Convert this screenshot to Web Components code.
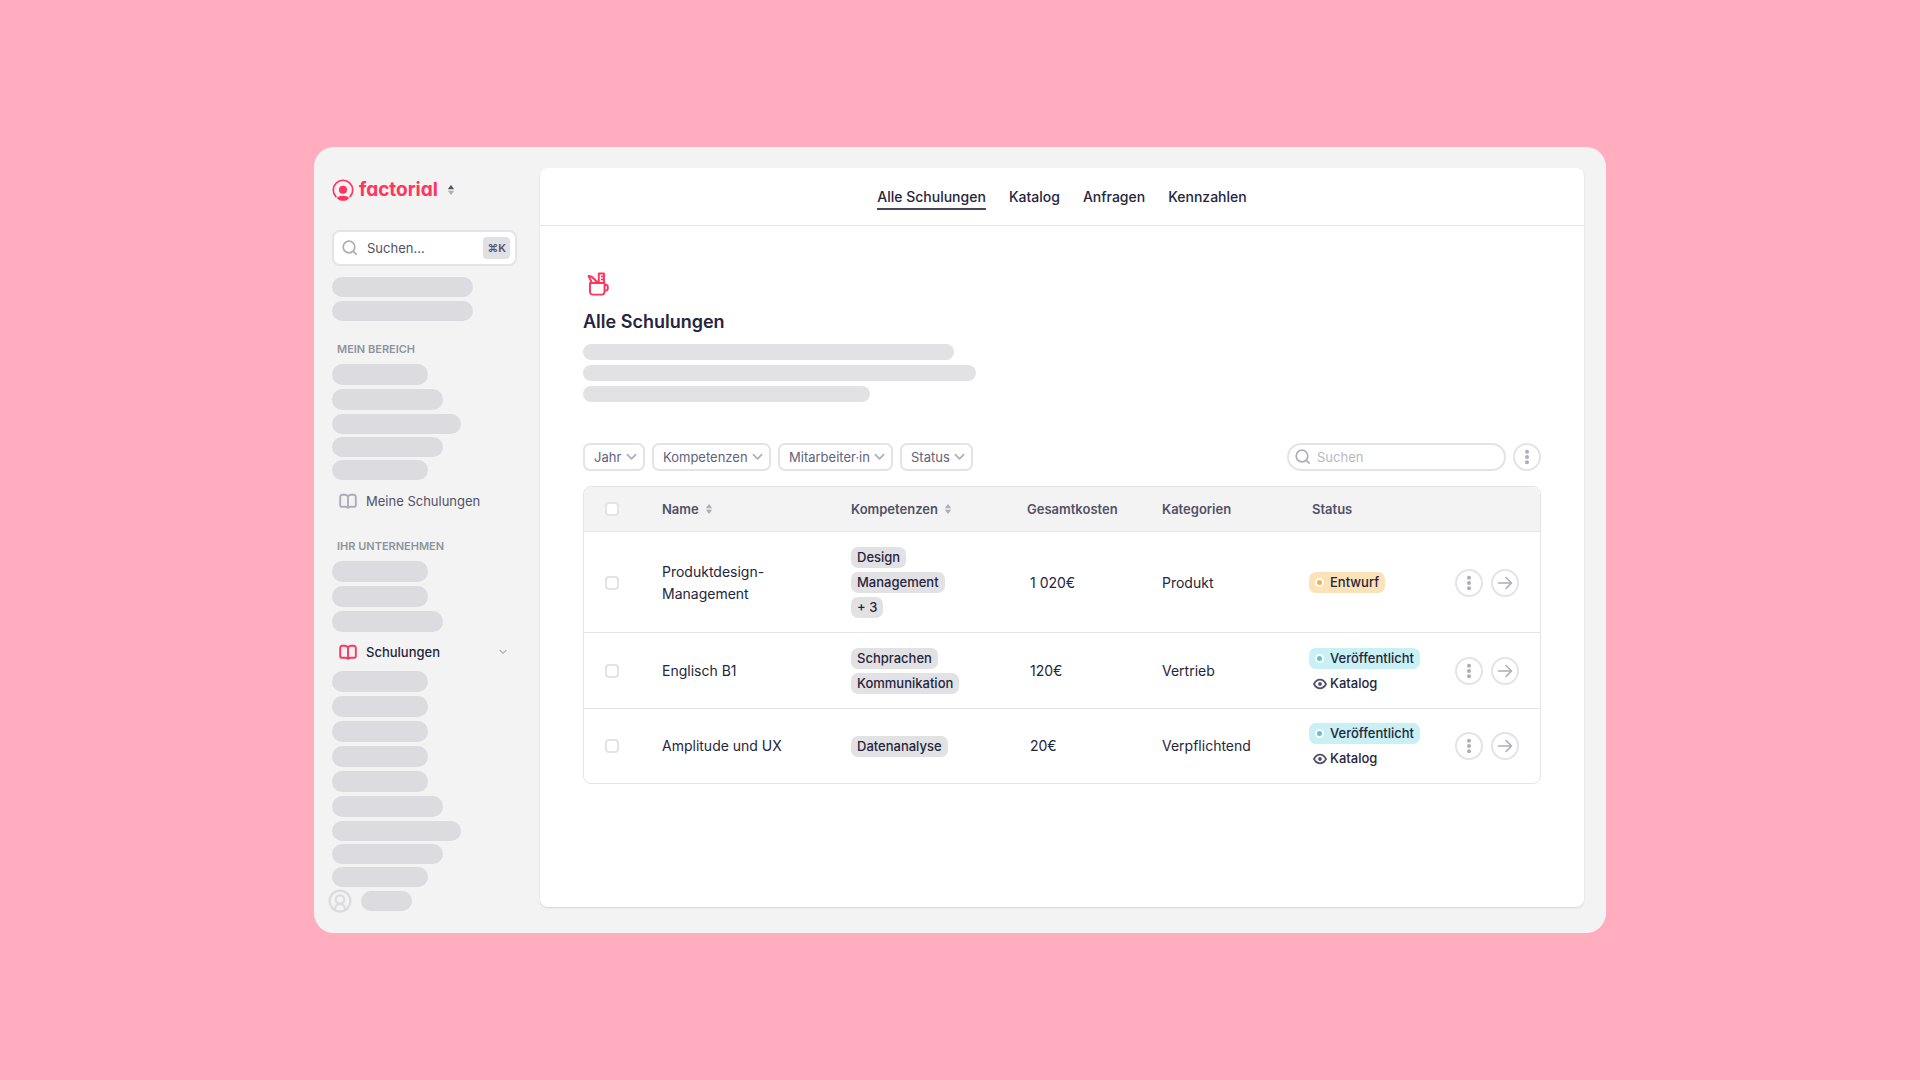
<!DOCTYPE html>
<html lang="de">
<head>
<meta charset="utf-8">
<title>Factorial – Alle Schulungen</title>
<style>
  html, body { height: 100%; margin: 0; }
  body {
    background: #ffadbf;
    font-family: Inter, "Liberation Sans", sans-serif;
    font-size: 14px;
    color: #25253d;
    --line: #e4e4e7;
    --muted: #adadba;
    --accent: #ff355e;
    --soft: #525169;
  }
</style>
</head>
<body>
<training-app></training-app>

<script>
const ICONS = {
  search: ['0 0 16 16', '<circle cx="7" cy="7" r="5.8"/><path d="M11.3 11.3L14.2 14.2"/>', 1.7],
  book: ['0 0 18 16', '<path d="M9 3.6C8.2 2.3 7 1.8 5.4 1.8H3.4C2 1.8 1.2 2.6 1.2 4v8.4c0 .9.5 1.4 1.4 1.4H6c1.4 0 2.4.3 3 1 .6-.7 1.6-1 3-1h3.4c.9 0 1.4-.5 1.4-1.4V4c0-1.4-.8-2.2-2.2-2.2h-2C11 1.8 9.8 2.3 9 3.6zM9 3.6v11"/>', 1.9],
  chevron: ['0 0 12 8', '<path d="M1.5 1.5L6 6l4.5-4.5"/>', 1.8],
  arrow: ['0 0 16 16', '<path d="M1.5 8h13M9 2.5L14.5 8 9 13.5"/>', 1.6],
  dots: ['0 0 16 16', '<g fill="currentColor" stroke="none"><circle cx="8" cy="2.7" r="2"/><circle cx="8" cy="8" r="2"/><circle cx="8" cy="13.3" r="2"/></g>', 1],
  sort: ['0 0 8 12', '<g stroke="none" fill="currentColor"><path d="M4 1L7.2 5.2H.8z"/><path d="M4 11L.8 6.8h6.4z" style="fill:var(--sort-down,currentColor)"/></g>', 1],
  eye: ['0 0 14 12', '<path d="M1 6c1.4-2.9 3.5-4.3 6-4.3S11.6 3.1 13 6c-1.4 2.9-3.5 4.3-6 4.3S2.4 8.9 1 6z"/><circle cx="7" cy="6" r="1.9" fill="currentColor" stroke="none"/>', 1.8],
  user: ['0 0 24 24', '<circle cx="12" cy="12" r="10.4"/><circle cx="12" cy="10.5" r="4.2"/><path d="M7 19.5c.8-3.2 2.6-4.7 5-4.7s4.2 1.5 5 4.7"/>', 2.2],
  logo: ['0 0 24 24', '<path d="M4.3 19.3a10.6 10.6 0 1 1 15.4 0"/><circle cx="12" cy="11.8" r="4.4" fill="currentColor" stroke="none"/><path d="M5.2 20.7c1.6-1.6 4-2.4 6.8-2.4s5.2.8 6.8 2.4C17 22.8 14.6 23.8 12 23.8s-5-1-6.800-3.100z" fill="currentColor" stroke="none"/>', 1.8],
  mug: ['0 0 22 24', '<path d="M3 11h14.5v8.800c0 1.800-1 2.800-2.800 2.800H5.800C4 22.600 3 21.600 3 19.800zM17.500 12.800h.9c1.400 0 2.400.9 2.400 2.300v1.200c0 1.400-1 2.300-2.400 2.300h-.9M11.800 11V1.500h5.200V11M17 4.400h-2.200M17 7.400h-2.200M5 11L1.600 4 4.800 4.700l6.200 6.100"/><path d="M1.200 3.200l3.400 1.200-2 2z" fill="currentColor" stroke="none"/>', 1.9]
};

function define(name, css, html) {
  const template = document.createElement('template');
  template.innerHTML = `<style>*{box-sizing:border-box}${css}</style>${html}`;
  customElements.define(name, class extends HTMLElement {
    constructor() {
      super();
      this.attachShadow({ mode: 'open' }).append(template.content.cloneNode(true));
    }
  });
}

customElements.define('ui-icon', class extends HTMLElement {
  connectedCallback() {
    if (this.shadowRoot) return;
    const [box, shape, stroke] = ICONS[this.getAttribute('name')];
    this.attachShadow({ mode: 'open' }).innerHTML = `
      <style>
        :host { display: inline-block; flex: none; width: 16px; height: 16px; }
        svg { display: block; width: 100%; height: 100%; }
      </style>
      <svg viewBox="${box}" fill="none" stroke="currentColor" stroke-width="${stroke}"
        stroke-linecap="round" stroke-linejoin="round" aria-hidden="true">${shape}</svg>`;
  }
});

/* Placeholder bars: widths="96 111 ..." */
customElements.define('skeleton-list', class extends HTMLElement {
  connectedCallback() {
    if (this.shadowRoot) return;
    const bars = this.getAttribute('widths').split(' ').map(w => `<i style="width:${w}px"></i>`).join('');
    this.attachShadow({ mode: 'open' }).innerHTML = `
      <style>
        :host { display: flex; flex-direction: column; gap: var(--bar-gap, 4px); }
        i { display: block; max-width: 100%; height: var(--bar-height, 20px); border-radius: 11px; background: var(--bar-color, #dbdbe0); }
      </style>${bars}`;
  }
});

/* Drop-down whose first option is its label. */
customElements.define('filter-select', class extends HTMLElement {
  connectedCallback() {
    if (this.shadowRoot) return;
    const label = this.getAttribute('label');
    this.attachShadow({ mode: 'open' }).innerHTML = `
      <style>
        :host { display: block; position: relative; }
        select { appearance: none; box-sizing: border-box; display: block; height: 28px; margin: 0; padding: 0 21px 0 9px; border: 2px solid var(--line); border-radius: 7px; background: #fff; color: #626278; font: inherit; font-size: 13px; }
        ui-icon { position: absolute; right: 8px; top: 10px; width: 11px; height: 8px; color: var(--muted); pointer-events: none; }
      </style>
      <select aria-label="${label}"><option>${label}</option></select><ui-icon name="chevron"></ui-icon>`;
  }
});

define('nav-item', `
  :host { display: block; color: var(--soft); }
  a { display: flex; align-items: center; gap: 9px; height: 24px; padding: 0 10px 0 7px; color: inherit; text-decoration: none; font-size: 13px; line-height: 20px; }
  .icon { color: var(--muted); width: 18px; height: 16px; }
  .text { flex: 1; }
  :host([active]) { color: #25253d; font-weight: 500; }
  :host([active]) .icon { color: var(--accent); }
`, `<a href="#"><ui-icon class="icon" name="book"></ui-icon><span class="text"><slot></slot></span><slot name="end"></slot></a>`);

define('app-sidebar', `
  :host { display: flex; flex-direction: column; width: 226px; flex: none; padding: 28px 23px 20px 18px; }
  .brand { display: flex; align-items: center; height: 30px; color: var(--accent); text-decoration: none; }
  .brand .logo { width: 22px; height: 22px; margin-right: 5px; }
  .word { font-size: 19px; line-height: 30px; font-weight: 700; font-feature-settings: "cv11"; }
  .brand .sort { width: 8px; height: 12px; margin-left: 9px; color: var(--soft); --sort-down: #adadba; }
  .search { display: flex; align-items: center; height: 36px; margin: 25px 0 11px; padding: 0 5px 0 8px; background: #fff; border: 2px solid var(--line); border-radius: 8px; }
  .search ui-icon { color: var(--muted); }
  input { flex: 1; min-width: 0; margin-left: 9px; padding: 0; border: 0; outline: 0; background: none; font: inherit; font-size: 13px; color: var(--soft); }
  input::placeholder { color: var(--soft); opacity: 1; }
  kbd { padding: 0 4px; border-radius: 4px; background: #e1e1e5; color: var(--soft); font: inherit; font-size: 11px; font-weight: 600; line-height: 22px; }
  h2 { margin: 20px 0 7px 5px; font-size: 11px; line-height: 16px; font-weight: 600; color: #8c959d; }
  nav-item { margin: 8px 0 7px; }
  .short + nav-item { margin-top: 9px; }
  nav-item + h2 { margin-top: 18px; }
  .chev { width: 8px; height: 6px; color: var(--muted); }
  .tall { --bar-height: 21px; }
  .short { --bar-gap: 3px; }
  .tall + .short { margin-top: 4px; }
  .me { display: flex; align-items: center; gap: 9px; margin: 2px 0 0 -4px; color: #dbdbe0; }
  .me ui-icon { width: 24px; height: 24px; }
`, `
  <a class="brand" href="#"><ui-icon class="logo" name="logo"></ui-icon><span class="word">factorial</span><ui-icon class="sort" name="sort"></ui-icon></a>
  <label class="search"><ui-icon name="search"></ui-icon><input type="search" placeholder="Suchen..." aria-label="Suchen"><kbd>⌘K</kbd></label>
  <skeleton-list widths="141 141"></skeleton-list>
  <h2>MEIN BEREICH</h2>
  <skeleton-list class="tall" widths="96 111"></skeleton-list>
  <skeleton-list class="short" widths="129 111 96"></skeleton-list>
  <nav-item>Meine Schulungen</nav-item>
  <h2>IHR UNTERNEHMEN</h2>
  <skeleton-list class="tall" widths="96 96 111"></skeleton-list>
  <nav-item active>Schulungen<ui-icon slot="end" class="chev" name="chevron"></ui-icon></nav-item>
  <skeleton-list class="tall" widths="96 96 96 96 96 111"></skeleton-list>
  <skeleton-list class="short" widths="129 111 96"></skeleton-list>
  <div class="me"><ui-icon name="user"></ui-icon><skeleton-list widths="51"></skeleton-list></div>
`);

define('app-tabs', `
  :host { display: flex; justify-content: center; align-items: center; gap: 23px; height: 58px; border-bottom: 1px solid var(--line); }
  ::slotted(a) { color: inherit; text-decoration: none; font-weight: 500; line-height: 22px; padding-top: 2px; border-bottom: 2px solid transparent; }
  ::slotted(a[aria-current]) { border-color: #46465c; }
`, `<slot></slot>`);

define('round-button', `
  :host { display: block; flex: none; }
  button { display: flex; align-items: center; justify-content: center; width: 28px; height: 28px; padding: 0; border: 2px solid var(--line); border-radius: 50%; background: #fff; color: var(--muted); }
`, `<button type="button"><slot></slot></button>`);

define('skill-chip', `
  :host { display: block; width: fit-content; padding: 0 6px; border-radius: 7px; background: #e2e2e5; font-size: 13px; font-weight: 500; line-height: 21px; }
`, `<slot></slot>`);

define('status-chip', `
  :host { display: flex; align-items: center; gap: 6px; width: fit-content; padding: 0 6px; border-radius: 7px; background: #fce2b9; --dot: #f5b243; font-size: 13px; font-weight: 500; line-height: 21px; }
  :host([published]) { background: #c8f0f5; --dot: #5fc3cf; }
  i { width: 9px; height: 9px; border: 2px solid #fff; border-radius: 50%; background: var(--dot); }
`, `<i></i><slot></slot>`);

define('catalog-tag', `
  :host { display: flex; align-items: center; gap: 3px; padding-left: 4px; font-size: 13px; font-weight: 500; line-height: 21px; }
  ui-icon { width: 14px; height: 12px; color: var(--soft); }
`, `<ui-icon name="eye"></ui-icon><slot></slot>`);

define('training-toolbar', `
  :host { display: flex; align-items: center; gap: 7px; }
  .search { display: flex; align-items: center; gap: 6px; width: 219px; height: 28px; margin-left: auto; padding: 0 10px 0 6px; border: 2px solid var(--line); border-radius: 14px; }
  .search ui-icon { color: var(--muted); }
  input { flex: 1; min-width: 0; padding: 0; border: 0; outline: 0; background: none; font: inherit; font-size: 13px; }
  input::placeholder { color: #b8b8c3; opacity: 1; }
`, `
  <filter-select label="Jahr"></filter-select>
  <filter-select label="Kompetenzen"></filter-select>
  <filter-select label="Mitarbeiter·in"></filter-select>
  <filter-select label="Status"></filter-select>
  <label class="search"><ui-icon name="search"></ui-icon><input type="search" placeholder="Suchen" aria-label="Schulungen suchen"></label>
  <round-button><ui-icon name="dots"></ui-icon></round-button>
`);

const actions = `<td><div class="actions"><round-button><ui-icon name="dots"></ui-icon></round-button><round-button><ui-icon name="arrow"></ui-icon></round-button></div></td>`;
const row = (name, skills, cost, category, status) => `<tr>
  <td class="pick"><input type="checkbox" aria-label="${name}"></td><td>${name.replace('-', '-<br>')}</td>
  <td><div class="stack">${skills.map(s => `<skill-chip>${s}</skill-chip>`).join('')}</div></td>
  <td class="inset">${cost}</td><td>${category}</td><td><div class="stack">${status}</div></td>${actions}</tr>`;
const published = `<status-chip published>Veröffentlicht</status-chip><catalog-tag>Katalog</catalog-tag>`;

define('training-table', `
  :host { display: block; border: 1px solid var(--line); border-radius: 8px; overflow: hidden; }
  table { width: 100%; table-layout: fixed; border-collapse: separate; border-spacing: 0; text-align: left; }
  th { height: 45px; padding: 0; background: #f3f3f3; color: var(--soft); font-size: 13px; font-weight: 600; line-height: 20px; border-bottom: 1px solid var(--line); }
  td { padding: 15px 0 14px; line-height: 22px; border-bottom: 1px solid var(--line); }
  tr:last-child td { padding-top: 14px; border-bottom: 0; }
  .pick { padding-left: 21px; }
  td.inset, th.inset { padding-left: 3px; }
  input { appearance: none; display: block; width: 14px; height: 14px; margin: 0; border: 2px solid var(--line); border-radius: 4px; background: #fff; }
  .stack { display: flex; flex-direction: column; gap: 4px; }
  .actions { display: flex; justify-content: flex-end; gap: 8px; padding-right: 21px; }
  th ui-icon { width: 8px; height: 12px; margin-left: 6px; color: var(--muted); vertical-align: -1px; }
`, `<table>
  <colgroup><col style="width:78px"><col style="width:189px"><col style="width:176px"><col style="width:135px"><col style="width:147px"><col style="width:120px"><col></colgroup>
  <thead><tr><th class="pick"><input type="checkbox" aria-label="Alle auswählen"></th><th>Name<ui-icon name="sort"></ui-icon></th><th>Kompetenzen<ui-icon name="sort"></ui-icon></th><th>Gesamtkosten</th><th>Kategorien</th><th class="inset">Status</th><th></th></tr></thead>
  <tbody>
  ${row('Produktdesign-Management', ['Design', 'Management', '+ 3'], '1 020€', 'Produkt', '<status-chip>Entwurf</status-chip>')}
  ${row('Englisch B1', ['Schprachen', 'Kommunikation'], '120€', 'Vertrieb', published)}
  ${row('Amplitude und UX', ['Datenanalyse'], '20€', 'Verpflichtend', published)}
  </tbody></table>`);

define('training-page', `
  :host { display: block; padding: 46px 43px 0; }
  .mug { display: block; width: 22px; height: 24px; margin-left: 4px; color: var(--accent); }
  h1 { margin: 13px 0 9px; font-size: 18px; line-height: 26px; font-weight: 600; }
  skeleton-list { --bar-height: 16px; --bar-gap: 5px; --bar-color: #e2e2e4; }
  training-toolbar { margin: 41px 0 15px; }
`, `
  <ui-icon class="mug" name="mug"></ui-icon>
  <h1>Alle Schulungen</h1>
  <skeleton-list widths="371 393 287"></skeleton-list>
  <training-toolbar></training-toolbar>
  <training-table></training-table>
`);

define('training-app', `
  :host { display: flex; align-items: center; justify-content: center; min-height: 100%; }
  .window { display: flex; width: 100%; max-width: 1292px; min-height: 786px; background: #f3f3f3; border-radius: 20px; }
  main { flex: 1; min-width: 0; margin: 21px 22px 26px 0; background: #fff; border-radius: 8px; box-shadow: 0 1px 2px rgba(30, 30, 60, .14); }
`, `
  <div class="window">
    <app-sidebar></app-sidebar>
    <main>
      <app-tabs><a href="#" aria-current="page">Alle Schulungen</a><a href="#">Katalog</a><a href="#">Anfragen</a><a href="#">Kennzahlen</a></app-tabs>
      <training-page></training-page>
    </main>
  </div>
`);
</script>
</body>
</html>
